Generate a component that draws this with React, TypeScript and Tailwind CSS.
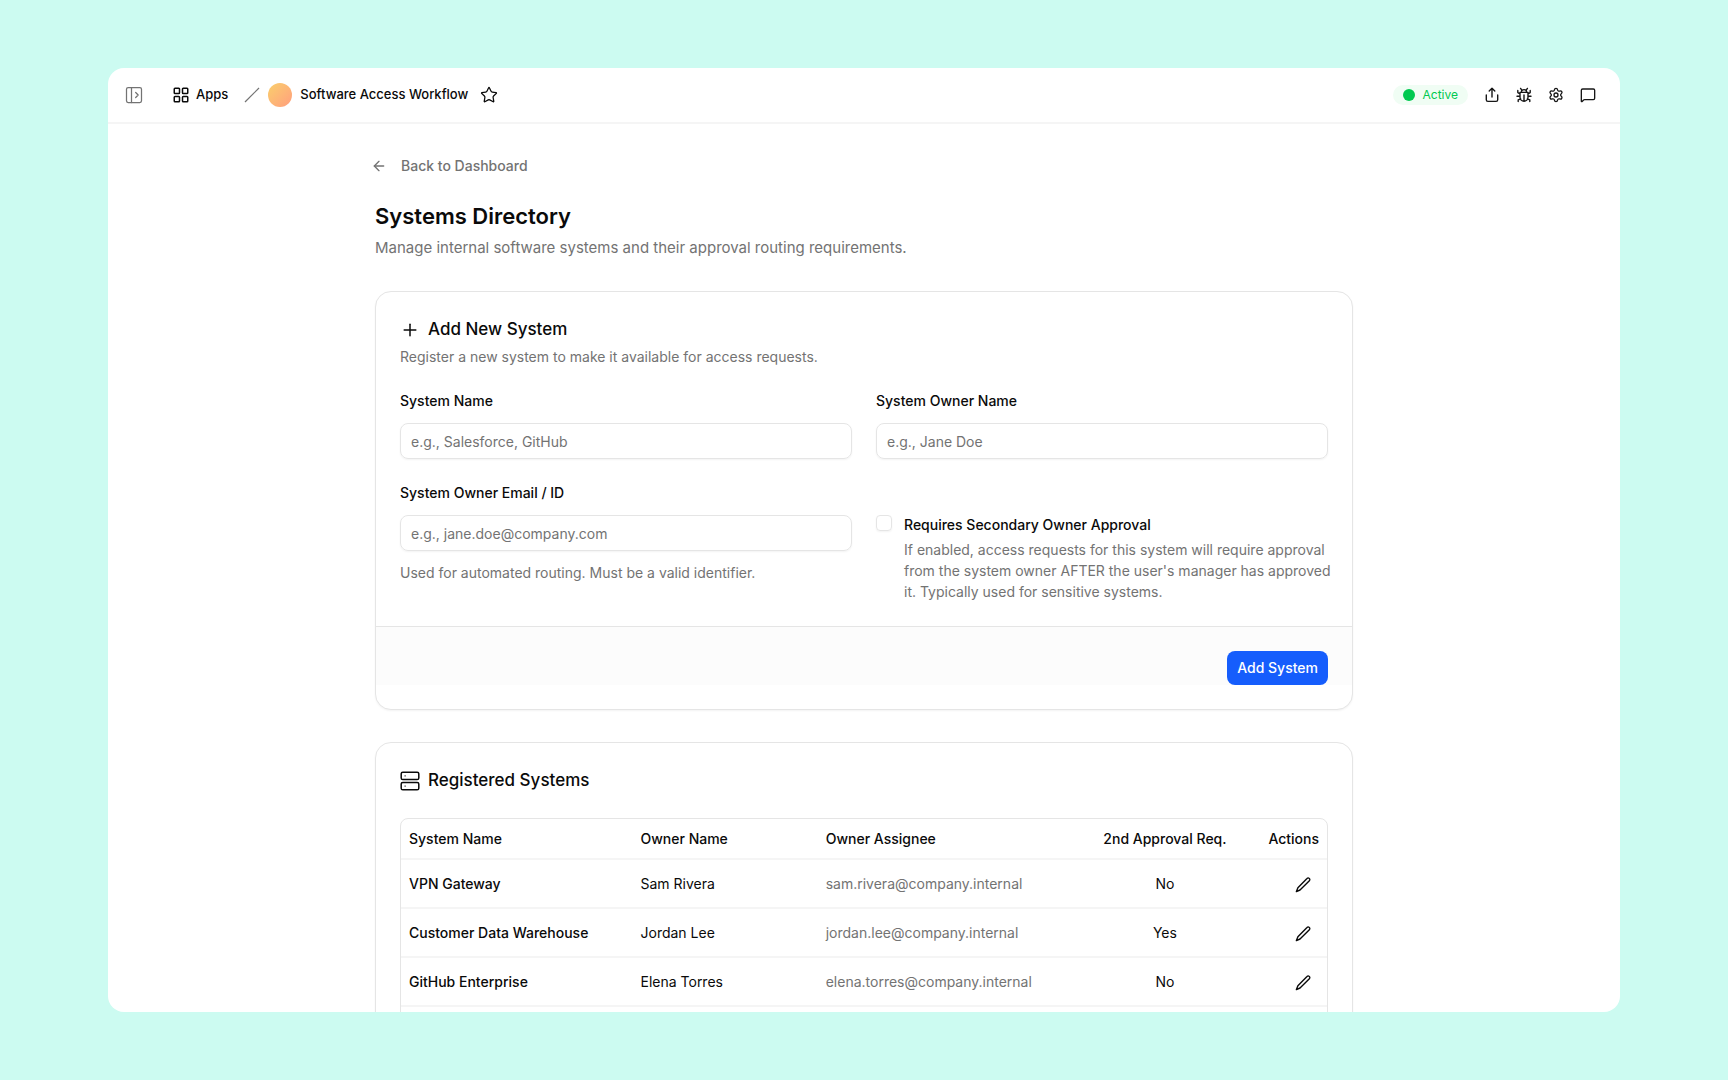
import { useState } from "react";
import type { ReactNode } from "react";
import {
	ArrowLeft,
	LayoutGrid,
	MessageSquare,
	PanelLeftOpen,
	Plus,
	Settings,
	Star,
} from "lucide-react";

interface System {
	name: string;
	owner: string;
	assignee: string;
	secondApproval: boolean;
}

const systems: System[] = [
	{
		name: "VPN Gateway",
		owner: "Sam Rivera",
		assignee: "sam.rivera@company.internal",
		secondApproval: false,
	},
	{
		name: "Customer Data Warehouse",
		owner: "Jordan Lee",
		assignee: "jordan.lee@company.internal",
		secondApproval: true,
	},
	{
		name: "GitHub Enterprise",
		owner: "Elena Torres",
		assignee: "elena.torres@company.internal",
		secondApproval: false,
	},
];

function PencilIcon() {
	return (
		<svg viewBox="0 0 16 16" fill="none" stroke="currentColor" strokeLinejoin="round" className="size-4">
			<path
				d="M12 1.5a1.5 1.5 0 0 1 2.4 2.2q-.1.2-.3.4L5 13 1.4 14.6 2.9 10.8Z"
				strokeWidth="1.4"
			/>
		</svg>
	);
}

function ShareIcon() {
	return (
		<svg
			viewBox="0 0 16 16"
			fill="none"
			stroke="currentColor"
			strokeWidth="1.4"
			strokeLinecap="round"
			strokeLinejoin="round"
			className="size-4"
		>
			<path d="M8 10V1.5M5.2 4.1 8 1.3l2.8 2.8M2.3 8v4.8c0 .9.7 1.6 1.6 1.6h8.2c.9 0 1.6-.7 1.6-1.6V8" />
		</svg>
	);
}

function BugIcon() {
	return (
		<svg
			viewBox="0 0 16 16"
			fill="none"
			stroke="currentColor"
			strokeWidth="1.4"
			strokeLinecap="round"
			strokeLinejoin="round"
			className="size-4"
		>
			<path d="M4 5.4h8v4.8a4 4 0 0 1-8 0ZM5.4 5.2a2.6 2.6 0 0 1 5.2 0M8 8v6M5.9 3.4 4.6 1.4M10.1 3.4l1.3-2M4 6.8 1.8 5.6V3.4M12 6.8l2.2-1.2V3.4M4 9.2H1M12 9.2H15M4.6 11.8 2.2 12.8v1.8M11.4 11.8l2.4 1v1.8" />
		</svg>
	);
}

function ServerIcon() {
	return (
		<svg viewBox="0 0 20 20" fill="none" stroke="currentColor" strokeWidth="1.5" className="size-5">
			<rect x="1.2" y="1.2" width="17.6" height="7.4" rx="1.6" />
			<rect x="1.2" y="11.4" width="17.6" height="7.4" rx="1.6" />
			<path d="M4.6 4.9h1M4.6 15.1h1" strokeWidth="1.2" />
		</svg>
	);
}

function Card({ children }: { children: ReactNode }) {
	return (
		<section className="rounded-2xl border border-neutral-200 bg-white py-6 shadow-xs">
			{children}
		</section>
	);
}

function CardTitle({ icon, children }: { icon: ReactNode; children: ReactNode }) {
	return (
		<h2 className="flex items-center gap-2 text-[17px] leading-[27px] font-medium">
			{icon}
			{children}
		</h2>
	);
}

interface FieldProps {
	id: string;
	label: string;
	placeholder: string;
	hint?: string;
}

function Field({ id, label, placeholder, hint }: FieldProps) {
	return (
		<div>
			<label htmlFor={id} className="block text-sm font-medium">
				{label}
			</label>
			<input
				id={id}
				type="text"
				placeholder={placeholder}
				className="mt-3 block h-9 w-full rounded-lg border border-neutral-200 px-2.5 text-sm shadow-xs placeholder:text-neutral-500"
			/>
			{hint && <p className="mt-3 text-sm text-neutral-500">{hint}</p>}
		</div>
	);
}

function TopBar() {
	return (
		<header className="flex h-14 shrink-0 items-center justify-between border-b-2 border-neutral-100 pr-6 pl-4">
			<nav className="flex items-center text-[13px] font-medium">
				<button type="button" aria-label="Open sidebar" className="text-neutral-500">
					<PanelLeftOpen className="size-5" strokeWidth={1.5} />
				</button>
				<a href="#" className="ml-7 flex items-center gap-1.5">
					<LayoutGrid className="size-[18px]" />
					Apps
				</a>
				<svg viewBox="0 0 16 16" stroke="currentColor" className="ml-4 size-4 text-neutral-500">
					<path d="M1 15 15 1" strokeWidth="1.2" />
				</svg>
				<span className="ml-2 size-6 rounded-full bg-linear-to-br from-[#f9cf6b] to-[#ff9e7d]" />
				<span className="ml-2">Software Access Workflow</span>
				<button type="button" aria-label="Add to favourites" className="ml-3">
					<Star className="size-[18px]" strokeWidth={1.7} />
				</button>
			</nav>
			<div className="flex items-center gap-4 text-neutral-900">
				<span className="flex h-5 items-center gap-2 rounded-full bg-green-50 px-2.5 text-xs text-[#00c950]">
					<span className="size-3 rounded-full bg-[#00c950]" />
					Active
				</span>
				<button type="button" aria-label="Share">
					<ShareIcon />
				</button>
				<button type="button" aria-label="Debug">
					<BugIcon />
				</button>
				<button type="button" aria-label="Settings">
					<Settings className="size-4" />
				</button>
				<button type="button" aria-label="Comments">
					<MessageSquare className="size-4" />
				</button>
			</div>
		</header>
	);
}

function AddSystemCard() {
	const [secondary, setSecondary] = useState(false);

	return (
		<Card>
			<form onSubmit={(e) => e.preventDefault()}>
				<div className="px-6">
					<CardTitle icon={<Plus className="size-5" strokeWidth={1.8} />}>
						Add New System
					</CardTitle>
					<p className="mt-1 text-sm text-neutral-500">
						Register a new system to make it available for access requests.
					</p>
				</div>
				<div className="mt-6 grid grid-cols-2 gap-x-6 gap-y-6 px-6">
					<Field id="system-name" label="System Name" placeholder="e.g., Salesforce, GitHub" />
					<Field id="owner-name" label="System Owner Name" placeholder="e.g., Jane Doe" />
					<Field
						id="owner-email"
						label="System Owner Email / ID"
						placeholder="e.g., jane.doe@company.com"
						hint="Used for automated routing. Must be a valid identifier."
					/>
					<div className="-mr-2 mt-8 flex items-start gap-3">
						<input
							id="secondary-approval"
							type="checkbox"
							checked={secondary}
							onChange={(e) => setSecondary(e.target.checked)}
							className="size-4 shrink-0 appearance-none rounded border border-neutral-200 shadow-xs checked:bg-blue-600"
						/>
						<div>
							<label htmlFor="secondary-approval" className="block text-sm font-medium">
								Requires Secondary Owner Approval
							</label>
							<p className="mt-1 text-sm leading-[21px] text-neutral-500">
								If enabled, access requests for this system will require approval from the
								system owner AFTER the user's manager has approved it. Typically used for
								sensitive systems.
							</p>
						</div>
					</div>
				</div>
				<div className="mt-6 flex justify-end border-t border-neutral-200 bg-neutral-50/50 px-6 pt-6">
					<button
						type="submit"
						className="h-[34px] rounded-lg bg-[#155dfc] px-2.5 text-sm font-medium text-white"
					>
						Add System
					</button>
				</div>
			</form>
		</Card>
	);
}

function RegisteredSystemsCard() {
	return (
		<Card>
			<div className="px-6">
				<CardTitle icon={<ServerIcon />}>Registered Systems</CardTitle>
				<div className="mt-6 rounded-lg border border-neutral-200">
					<table className="w-full table-fixed text-left text-sm">
						<thead>
							<tr className="h-10 border-b-2 border-neutral-100">
								<th className="w-[25%] px-2 font-medium">System Name</th>
								<th className="w-[20%] px-2 font-medium">Owner Name</th>
								<th className="w-[29%] px-2 font-medium">Owner Assignee</th>
								<th className="w-[17%] px-2 text-center font-medium">2nd Approval Req.</th>
								<th className="px-2 text-right font-medium">Actions</th>
							</tr>
						</thead>
						<tbody>
							{systems.map((system) => (
								<tr key={system.name} className="h-[49px] border-b-2 border-neutral-100">
									<td className="px-2 font-medium">{system.name}</td>
									<td className="px-2">{system.owner}</td>
									<td className="px-2 text-neutral-500">{system.assignee}</td>
									<td className="px-2 text-center">{system.secondApproval ? "Yes" : "No"}</td>
									<td className="px-4 text-right">
										<button type="button" aria-label={`Edit ${system.name}`} className="align-middle">
											<PencilIcon />
										</button>
									</td>
								</tr>
							))}
						</tbody>
					</table>
					<div className="h-12" />
				</div>
			</div>
		</Card>
	);
}

export default function App() {
	return (
		<div className="h-screen bg-[#ccfbf1] px-[108px] py-[68px] font-[Inter,sans-serif] text-neutral-950">
			<div className="flex h-full flex-col overflow-hidden rounded-2xl bg-white">
				<TopBar />
				<main className="min-h-0 flex-1 overflow-hidden">
					<div className="mx-auto max-w-[978px] pt-8">
						<a
							href="#"
							className="-ml-1 flex w-fit items-center gap-[14px] text-sm font-medium text-neutral-500"
						>
							<ArrowLeft className="size-4" />
							Back to Dashboard
						</a>
						<h1 className="mt-6 text-[22px] leading-8 font-semibold">Systems Directory</h1>
						<p className="mt-1 text-[15px] leading-6 text-neutral-500">
							Manage internal software systems and their approval routing requirements.
						</p>
						<div className="mt-[31px] flex flex-col gap-8">
							<AddSystemCard />
							<RegisteredSystemsCard />
						</div>
					</div>
				</main>
			</div>
		</div>
	);
}
